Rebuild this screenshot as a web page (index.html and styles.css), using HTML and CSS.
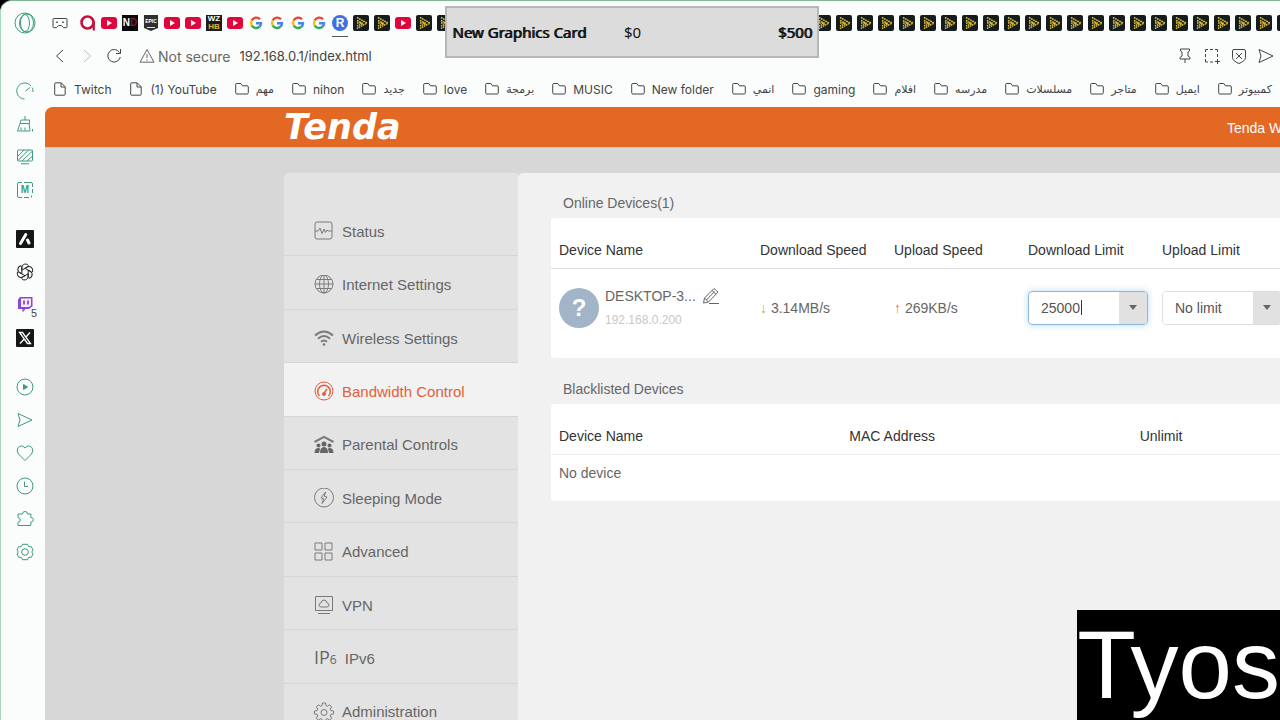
FILE: index.html
```
<!DOCTYPE html>
<html lang="en">

<head>
    <meta charset="utf-8">
    <meta name="viewport" content="width=device-width, initial-scale=1">
    <title>Tenda WiFi</title>
    <link rel="stylesheet" href="styles.css">
</head>

<body>
    <svg class="defs" aria-hidden="true">
        <symbol id="yt" viewBox="0 0 16 16"><rect y="2" width="16" height="12" rx="3" fill="#e0063c"/><path d="M6 5l5 3-5 3z" fill="#fff"/></symbol>
        <symbol id="opgg" viewBox="0 0 16 16"><circle cx="7.500" cy="7.500" r="6" fill="none" stroke="#c8103c" stroke-width="2.600"/><path d="M13.800 7v8.500" stroke="#c8103c" stroke-width="2.200"/></symbol>
        <symbol id="google" viewBox="0 0 16 16"><g fill="none" stroke-width="2.400"><path d="M12 4.300A5 5 0 0 0 3.700 5.500" stroke="#ea4335"/><path d="M3.700 5.500a5 5 0 0 0 0 5" stroke="#fbbc05"/><path d="M3.700 10.500a5 5 0 0 0 7.800 1.200" stroke="#34a853"/><path d="M11.500 11.700A5 5 0 0 0 13 8.200H8" stroke="#4285f4"/></g></symbol>
        <symbol id="play" viewBox="0 0 16 16"><rect width="16" height="16" rx="2" fill="#151c1e"/><path d="M4 2.500L14 8 4 13.500M4 5.500L10 8.500 4 11M4 8h5" fill="none" stroke="#e2c23c" stroke-width="1.500" stroke-dasharray="1.700 .7"/></symbol>
        <symbol id="folder" viewBox="0 0 14 14"><path d="M.7 2.500v8.300q0 1.200 1.200 1.200h10.200q1.200 0 1.200-1.200V5q0-1.200-1.200-1.200H7.500L5.800 1.500H1.700q-1 0-1 1z"/></symbol>
        <symbol id="doc" viewBox="0 0 14 14"><path d="M1.700 1.800q0-1 1-1h5.500l4 4v7.400q0 1-1 1H2.700q-1 0-1-1zM8 1v4h4"/></symbol>
        <symbol id="send" viewBox="0 0 18 18"><path d="M2 2.500L16 9 2 15.500 4 9z"/></symbol>
    </svg>

    <div class="browser">
        <aside class="dock">
            <button class="opera" aria-label="Opera menu"><svg viewBox="0 0 22 22"><circle cx="11" cy="11" r="10"/><ellipse cx="12.500" cy="11" rx="7" ry="9"/><ellipse cx="11" cy="11" rx="4.500" ry="8.500"/></svg></button>
            <div class="dock-group">
                <button aria-label="Speed dial"><svg viewBox="0 0 18 18"><path d="M15 4A8 8 0 1 0 8.500 17M9.500 9L14 5.500M16 5.500q1.200 2 1 4.500"/></svg></button>
                <button aria-label="Cleaner"><svg viewBox="0 0 18 18"><path d="M9 1v4M5 5h8.500v3.500H4zM4 8.500L1.500 16H14l-1-7.500M5 12.500v3M9 12.500v3M16.500 14v2.500"/></svg></button>
                <button aria-label="Wallpaper"><svg viewBox="0 0 18 18"><rect x="1.500" y="2" width="15" height="11" rx="1"/><path d="M2 8l6-6M2 12.500L12.500 2M6 13L16.500 3M11 13l5.500-5M5 15.800h8"/></svg></button>
                <button aria-label="Mods"><svg viewBox="0 0 18 18"><path d="M6 1.500H3q-1.500 0-1.500 1.500v12q0 1.500 1.500 1.500h3M8 1.500h7q1.500 0 1.500 1.500v3M16.500 8v4M8 16.500h5M15.500 14.500v2"/></svg><b>M</b></button>
            </div>
            <div class="dock-group">
                <button aria-label="Aria"><svg viewBox="0 0 18 18"><rect width="18" height="18" rx="1" fill="#151717" stroke="none"/><path d="M4.500 13.500L9.800 4.500M11.500 10l1.500 3" stroke="#fff" stroke-width="3" stroke-linecap="round"/></svg></button>
                <button class="dark" aria-label="ChatGPT"><svg viewBox="-9 -9 18 18"><path id="knot" d="M-3.200 1.800V-4.300A3.700 3.700 0 0 1 3.600-6.300M0-3.700L3.300-5.600"/><use href="#knot" transform="rotate(60)"/><use href="#knot" transform="rotate(120)"/><use href="#knot" transform="rotate(180)"/><use href="#knot" transform="rotate(240)"/><use href="#knot" transform="rotate(300)"/></svg></button>
                <button aria-label="Twitch"><svg viewBox="0 0 18 18"><path d="M4 1h12.500v9.500L13 13H9.500l-3 3.500V13H2V3.500z" fill="#8a45e0" stroke="none"/><path d="M5 2.500h10v7L13 11H5z" fill="#f4eefc" stroke="none"/><path d="M8 4.500v4M12 4.500v4" stroke="#8a45e0" stroke-width="1.800"/></svg><span class="count">5</span></button>
                <button aria-label="X"><svg viewBox="0 0 18 18"><rect width="18" height="18" rx="1" fill="#151717" stroke="none"/><path d="M3.500 3.500h3l8 11h-3zM14 3.500L9.800 8.300M8 10.200l-4 4.300" stroke="#fff" stroke-width="1.300"/></svg></button>
            </div>
            <div class="dock-group">
                <button aria-label="Player"><svg viewBox="0 0 18 18"><circle cx="9" cy="9" r="8"/><path d="M7.500 6.500l4 2.500-4 2.500z" fill="#3f9b78"/></svg></button>
                <button aria-label="Flow"><svg><use href="#send"/></svg></button>
                <button aria-label="Favourites"><svg viewBox="0 0 18 18"><path d="M9 16.500L2.500 10Q0 7 2 3.700 5.500 0 9 4q3.500-4 7-.3 2 3.300-.5 6.300z"/></svg></button>
                <button aria-label="History"><svg viewBox="0 0 18 18"><circle cx="9" cy="9" r="8"/><path d="M8.500 4.500v5H12"/></svg></button>
                <button aria-label="Extensions"><svg viewBox="0 0 18 18"><path d="M2 4h4.500Q6.500 1.500 9 1.500T11.500 4h3.300v3.500q2.500 0 2.500 2.300t-2.500 2.300v3.400H2v-3.200q2.300-.3 2.300-2.300T2 7.600z"/></svg></button>
                <button aria-label="Settings"><svg viewBox="0 0 18 18"><path d="M6.500 1.300h5l1.200 2.300 2.600.1 1.700 3.400L15.800 9l1.200 2-1.700 3.300-2.600.1-1.200 2.300h-5l-1.200-2.300-2.600-.1L1 11l1.200-2L1 7.100l1.700-3.400 2.600-.1z"/><circle cx="9" cy="9" r="3.300"/></svg></button>
            </div>
        </aside>

        <div class="window">
            <div class="tabs" id="tabs">
                <button class="workspace" aria-label="Workspace"><svg viewBox="0 0 16 16"><path d="M2 3.500h12q1 0 1 1v7q0 1.200-1 1.200h-2.500L9.500 10.500h-3l-2 2.200H2q-1 0-1-1.200v-7q0-1 1-1z"/><path d="M4.200 7.200h1.600M10.200 7.200h1.600" stroke-width="1.600"/></svg></button>
            </div>

            <form class="address">
                <button type="button" aria-label="Back"><svg viewBox="0 0 18 18"><path d="M12 3L5.500 9l6.500 6"/></svg></button>
                <button type="button" class="off" aria-label="Forward" disabled><svg viewBox="0 0 18 18"><path d="M6 3l6.500 6L6 15"/></svg></button>
                <button type="button" aria-label="Reload"><svg viewBox="0 0 18 18"><path d="M14.500 5.500A6.300 6.300 0 1 0 15.300 10M15.500 2v4.500H11"/></svg></button>
                <label class="secure" for="url"><svg viewBox="0 0 18 18"><path d="M9 2.500l7 12.700H2zM9 7v4M9 12.300v1.300"/></svg>Not secure</label>
                <input id="url" type="text" value="192.168.0.1/index.html">
                <button type="button" aria-label="Pin"><svg viewBox="0 0 18 18"><path d="M4.500 2h9v2l-1.500 1v4l2 1.500V12H4v-1.500L6 9V5L4.500 4zM9 12v4"/></svg></button>
                <button type="button" aria-label="Snapshot"><svg viewBox="0 0 18 18"><path d="M2.500 5V2.500H5M7 2.500h3M12 2.500h2.500V5M14.500 7v3M2.500 7v3M2.500 12v3H5M7 15h3M14.500 12v5M12 14.500h5"/></svg></button>
                <button type="button" aria-label="Blocker"><svg viewBox="0 0 18 18"><path d="M4 2.500h10q1.500 0 1.500 1.500v6.500Q15.500 14 9 16.500 2.500 14 2.500 10.500V4Q2.500 2.500 4 2.500zM6 6l6 6M12 6l-6 6"/></svg></button>
                <button type="button" aria-label="Send"><svg><use href="#send"/></svg></button>
            </form>

            <nav class="bookmarks" id="bookmarks"></nav>

            <div class="site">
                <header class="topbar">
                    <div class="container">
                        <a class="logo" href="#">Tenda</a>
                        <a class="product" href="#">Tenda WiFi</a>
                    </div>
                </header>

                <div class="container main">
                    <nav class="menu">
                        <ul>
                            <li><a href="#"><svg viewBox="0 0 20 20"><rect x="1" y="1" width="17" height="17" rx="2"/><path d="M1 10h3l2-3 2 5.500L10 8l1.500 3.500L13 9l1 1h4"/></svg>Status</a></li>
                            <li><a href="#"><svg viewBox="0 0 20 20"><circle cx="10" cy="9" r="9"/><ellipse cx="10" cy="9" rx="4.500" ry="9"/><path d="M10 0v18M1 9h18M2.500 4.500h15M2.500 13.500h15"/></svg>Internet Settings</a></li>
                            <li><a href="#"><svg viewBox="0 0 20 20"><path d="M1 7.500q9-8 18 0M4 10.800q6-5.500 12 0M7 13.800q3-2.700 6 0" stroke-width="2"/><circle cx="10" cy="16.500" r="1.300" fill="#777" stroke="none"/></svg>Wireless Settings</a></li>
                            <li class="active"><a href="#"><svg viewBox="0 0 20 20"><circle cx="10" cy="10" r="9"/><path d="M5.500 15A6.300 6.300 0 1 1 14.500 15M10 12.500L13 8" stroke-width="1.500"/><circle cx="10" cy="13" r="1.500" fill="#e2603a"/></svg>Bandwidth Control</a></li>
                            <li><a href="#"><svg viewBox="0 0 20 20"><path d="M.5 7L10 1.800 19.500 7" stroke-width="2"/><g fill="#666" stroke="none"><circle cx="10" cy="9" r="2.500"/><circle cx="4.500" cy="10.500" r="2"/><circle cx="15.500" cy="10.500" r="2"/><path d="M6 18q0-6 4-6t4 6zM.5 18q0-5 4-5 1.500 0 1.500 1l-1 4zM19.500 18q0-5-4-5-1.500 0-1.500 1l1 4z"/></g></svg>Parental Controls</a></li>
                            <li><a href="#"><svg viewBox="0 0 20 20"><circle cx="10" cy="9.500" r="9.500"/><path d="M11.500 4L7 10l2.500.7L8 15.500 13 9l-2.700-.6z"/></svg>Sleeping Mode</a></li>
                            <li><a href="#"><svg viewBox="0 0 20 20"><path d="M1 1h7v7H1zM11 1h7v7h-7zM1 11h7v7H1zM11 11h7v7h-7z"/></svg>Advanced</a></li>
                            <li><a href="#"><svg viewBox="0 0 20 20"><path d="M1.500 1.500h17v14h-17zM4 18.500h12M7 12q-2-.3-2-2t2-2q.5-3 3-3t3 3q2 .3 2 2t-2 2z"/></svg>VPN</a></li>
                            <li><a href="#"><span class="ip">IP<small>6</small></span>IPv6</a></li>
                            <li><a href="#"><svg viewBox="0 0 20 20"><path d="M8.500 1h3l.5 2.700 1.500.6 2.200-1.500 2 2-1.500 2.300.6 1.400 2.700.5v3l-2.700.5-.6 1.400 1.500 2.300-2 2-2.200-1.500-1.500.6-.5 2.700h-3L8 17.300l-1.500-.6-2.200 1.500-2-2 1.500-2.300-.6-1.400L.5 12V9l2.700-.5.6-1.400-1.500-2.300 2-2 2.200 1.500L8 3.700z"/><circle cx="10" cy="10.500" r="3"/></svg>Administration</a></li>
                        </ul>
                    </nav>

                    <main class="content">
                        <h2>Online Devices(1)</h2>
                        <div class="card online">
                            <table>
                                <thead>
                                    <tr>
                                        <th class="name">Device Name</th>
                                        <th>Download Speed</th>
                                        <th>Upload Speed</th>
                                        <th>Download Limit</th>
                                        <th>Upload Limit</th>
                                        <th></th>
                                    </tr>
                                </thead>
                                <tbody>
                                    <tr>
                                        <td>
                                            <div class="device">
                                                <span class="avatar">?</span>
                                                <div>
                                                    <div class="device-name">DESKTOP-3...
                                                        <button aria-label="Rename"><svg viewBox="0 0 18 18"><path d="M1.500 16l1-5L12 1.500l4 3.500-9.500 10zM2.500 11l4 4M10 3.500l4 3.700M4.500 13l8-8.500M7 16.500h10"/></svg></button>
                                                    </div>
                                                    <div class="device-ip">192.168.0.200</div>
                                                </div>
                                            </div>
                                        </td>
                                        <td><span class="down">↓</span> 3.14MB/s</td>
                                        <td><span class="up">↑</span> 269KB/s</td>
                                        <td>
                                            <div class="combo focused">
                                                <input type="text" value="25000" aria-label="Download limit">
                                                <button aria-label="Download limit options"></button>
                                            </div>
                                        </td>
                                        <td>
                                            <div class="combo">
                                                <input type="text" value="No limit" aria-label="Upload limit">
                                                <button aria-label="Upload limit options"></button>
                                            </div>
                                        </td>
                                        <td></td>
                                    </tr>
                                </tbody>
                            </table>
                        </div>

                        <h2>Blacklisted Devices</h2>
                        <div class="card blacklist">
                            <table>
                                <thead>
                                    <tr>
                                        <th>Device Name</th>
                                        <th>MAC Address</th>
                                        <th>Unlimit</th>
                                    </tr>
                                </thead>
                                <tbody>
                                    <tr>
                                        <td colspan="3">No device</td>
                                    </tr>
                                </tbody>
                            </table>
                        </div>
                    </main>
                </div>
            </div>
        </div>
    </div>

    <div class="goal"><b>New Graphics Card</b><span>$0</span><b>$500</b></div>
    <div class="caption">Tyos</div>

    <script>
        var tabs = ['opgg', 'yt', 'no', 'epic', 'yt', 'yt', 'wz', 'yt', 'google', 'google', 'google', 'google', 'r', 'play', 'play', 'yt'];
        while (tabs.length < 58) tabs.push('play');

        // favicons that are made of letters
        var letters = {
            no: 'N<i>D</i>',
            epic: 'EPIC',
            wz: 'WZ<i>HB</i>',
            r: 'R'
        };

        var bookmarks = ['Twitch', '(1) YouTube', 'مهم', 'nihon', 'جديد', 'love', 'برمجة', 'MUSIC', 'New folder', 'انمي', 'gaming',
            'افلام', 'مدرسه', 'مسلسلات', 'متاجر', 'ايميل', 'كمبيوتر'];

        var html = '';
        for (var i = 0; i < tabs.length; i++) {
            html += '<button class="tab' + (tabs[i] == 'r' ? ' current' : '') + '" aria-label="Tab ' + (i + 1) + '">';
            if (letters[tabs[i]]) html += '<span class="fav ' + tabs[i] + '">' + letters[tabs[i]] + '</span>';
            else html += '<svg><use href="#' + tabs[i] + '"/></svg>';
            html += '</button>';
        }
        document.getElementById('tabs').insertAdjacentHTML('beforeend', html);

        html = '';
        for (var j = 0; j < bookmarks.length; j++) {
            var arabic = bookmarks[j].charCodeAt(0) > 1500;
            html += '<a href="#"><svg><use href="#' + (j < 2 ? 'doc' : 'folder') + '"/></svg><span' + (arabic ? ' class="arabic" lang="ar"' : '') + '>' + bookmarks[j] + '</span></a>';
        }
        document.getElementById('bookmarks').innerHTML = html;
    </script>
</body>

</html>
```
FILE: styles.css
```
* {
    margin: 0;
    padding: 0;
    box-sizing: border-box;
}

body {
    height: 100vh;
    overflow: hidden;
    background: #000000;
    font-family: "Liberation Sans", Arial, sans-serif;
}

button {
    border: 0;
    background: none;
    font: inherit;
    color: inherit;
}

a {
    color: inherit;
    text-decoration: none;
}

svg {
    display: block;
    flex: none;
    fill: none;
    stroke: currentColor;
}

.defs {
    position: absolute;
    width: 0;
    height: 0;
}

.browser {
    display: flex;
    height: 100vh;
    overflow: hidden;
    background: #fafdfc;
    border-top: 1px solid #7fb893;
    border-left: 1px solid #a5dcc0;
    border-top-left-radius: 12px;
}

/* left dock */

.dock {
    flex: none;
    width: 44px;
    padding: 11px 0 0 2px;
    color: #3f9b78;
}

.dock button {
    display: flex;
    align-items: center;
    justify-content: center;
    position: relative;
    width: 44px;
    height: 33px;
}

.dock svg {
    width: 18px;
    height: 18px;
}

.dock .opera {
    height: 22px;
    margin-bottom: 40px;
}

.dock .opera svg {
    width: 22px;
    height: 22px;
}

.dock b {
    position: absolute;
    font-size: 10px;
}

.dock-group {
    margin-bottom: 16px;
}

.dock .dark {
    color: #222222;
}

.count {
    position: absolute;
    right: 10px;
    bottom: 2px;
    font-size: 11px;
    line-height: 12px;
    color: #444444;
    background: #fafdfc;
}

/* browser bars */

.window {
    flex: 1;
    min-width: 0;
    display: flex;
    flex-direction: column;
    color: #444444;
    font-family: Inter, "Liberation Sans", sans-serif;
}

.tabs {
    display: flex;
    flex: none;
    gap: 5px;
    height: 38px;
    padding: 5px 0 0 7px;
    overflow: hidden;
}

.tabs button {
    flex: none;
    width: 16px;
    height: 31px;
    padding-top: 9px;
    display: flex;
    align-items: flex-start;
}

.tabs svg,
.fav {
    width: 16px;
    height: 16px;
}

.tab svg {
    stroke: none;
}

.tabs .workspace {
    margin-right: 7px;
}

.tabs .current {
    border-bottom: 1px solid #555555;
}

.fav {
    flex: none;
    color: #ffffff;
    font-family: "Liberation Sans", Arial, sans-serif;
    font-weight: bold;
    text-align: center;
}

.fav i {
    font-style: normal;
}

.no {
    background: #08080a;
    font-size: 10px;
    line-height: 16px;
}

.no i {
    color: #7a1a2c;
}

.epic {
    padding: 1px;
    background: #2d2f32;
    font-size: 5px;
    line-height: 11px;
    clip-path: polygon(6% 0, 94% 0, 94% 82%, 50% 100%, 6% 82%);
}

.epic::after {
    content: "";
    display: block;
    width: 8px;
    height: 1px;
    margin: 0 auto;
    background: #dddddd;
}

.wz {
    display: flex;
    flex-direction: column;
    align-items: center;
    background: #1c1c18;
    font-size: 8px;
    line-height: 8px;
}

.wz i {
    color: #e3b23a;
}

.r {
    border-radius: 50%;
    background: #3f6fe0;
    font-size: 12px;
    line-height: 16px;
}

.address {
    display: flex;
    flex: none;
    align-items: center;
    gap: 9px;
    height: 34px;
    padding: 0 5px 0 6px;
    font-size: 14px;
}

.address svg {
    width: 18px;
    height: 18px;
}

.address .off {
    color: #bbbbbb;
}

.secure {
    display: flex;
    align-items: center;
    gap: 2px;
    margin-left: 6px;
    color: #666666;
}

.address input {
    flex: 1;
    border: 0;
    outline: 0;
    background: none;
    font: inherit;
    font-size: 13px;
    color: #444444;
}

.bookmarks {
    display: flex;
    flex: none;
    gap: 18px;
    height: 34px;
    padding: 0 0 2px 8px;
    overflow: hidden;
    font-size: 12px;
}

.bookmarks a {
    display: flex;
    flex: none;
    align-items: center;
    gap: 7px;
}

.bookmarks svg {
    width: 14px;
    height: 14px;
}

.arabic {
    font-family: "DejaVu Sans", sans-serif;
    font-size: 11px;
}

/* router page */

.site {
    flex: 1;
    overflow: hidden;
    display: flex;
    flex-direction: column;
    background: #d7d7d7;
    border-top-left-radius: 8px;
    font-family: "Liberation Sans", Arial, sans-serif;
}

.container {
    display: flex;
    min-width: 1171px;
    margin: 0 239px;
}

.topbar {
    flex: none;
    background: #e36824;
    border-bottom: 1px solid #ecc5ae;
    color: #ffffff;
}

.topbar .container {
    align-items: center;
    justify-content: space-between;
    height: 40px;
}

.logo {
    font-family: "DejaVu Sans", sans-serif;
    font-size: 35px;
    line-height: 40px;
    font-weight: bold;
    font-style: italic;
}

.product {
    width: 228px;
    flex: none;
    padding-top: 2px;
    font-size: 14px;
}

.main {
    flex: 1;
    margin-top: 25px;
}

.menu {
    flex: none;
    width: 234px;
    padding-top: 30px;
    background: #e3e3e3;
    border-top-left-radius: 5px;
    color: #666666;
    font-size: 15px;
}

.menu ul {
    display: flex;
    flex-direction: column;
    height: 534px;
    list-style: none;
}

.menu li {
    flex: 1;
    border-bottom: 1px solid #d5d5d5;
}

.menu a {
    display: flex;
    align-items: center;
    gap: 8px;
    height: 100%;
    padding: 4px 0 0 30px;
}

.menu svg {
    width: 20px;
    height: 20px;
    color: #7a7a7a;
}

.menu .active,
.menu .active svg {
    color: #e2603a;
}

.menu .active {
    background: #f2f2f2;
}

.ip {
    font-family: "Open Sans", sans-serif;
    font-size: 18px;
    line-height: 20px;
    font-weight: 500;
}

.ip small {
    font-size: 12px;
}

.content {
    flex: 1;
    padding: 15px 33px;
    background: #f1f1f1;
    border-top-left-radius: 5px;
    color: #666666;
    font-size: 14px;
}

.content h2 {
    padding-left: 12px;
    font-size: 14px;
    line-height: 30px;
    font-weight: normal;
}

.card {
    margin-bottom: 16px;
    background: #ffffff;
    border-radius: 4px;
}

.card table {
    width: 100%;
    table-layout: fixed;
    border-collapse: collapse;
}

.card th {
    padding: 22px 8px 8px;
    border-bottom: 1px solid #dddddd;
    line-height: 20px;
    font-weight: normal;
    text-align: left;
    color: #333333;
}

.card .name {
    width: 201px;
}

.card td {
    padding: 8px 8px 18px;
    line-height: 20px;
}

.card.online td {
    height: 89px;
    padding: 0 8px 11px;
}

.blacklist th {
    border-color: #eeeeee;
}

.device {
    display: flex;
    align-items: center;
    gap: 6px;
}

.avatar {
    flex: none;
    width: 40px;
    height: 40px;
    border-radius: 50%;
    background: #a2b4c8;
    color: #ffffff;
    font-size: 24px;
    line-height: 40px;
    font-weight: bold;
    text-align: center;
}

.device-name {
    display: flex;
    align-items: center;
    gap: 6px;
    line-height: 24px;
}

.device-name svg {
    width: 18px;
    height: 18px;
}

.device-ip {
    font-size: 12px;
    line-height: 24px;
    color: #c8c8c8;
}

.down {
    color: #b5b83a;
}

.up {
    color: #e8793a;
}

.combo {
    display: flex;
    width: 120px;
    height: 34px;
    border: 1px solid #dddddd;
    border-radius: 4px;
    overflow: hidden;
}

.combo input {
    flex: 1;
    min-width: 0;
    padding-left: 12px;
    border: 0;
    outline: 0;
    font: inherit;
    color: #555555;
}

.combo button {
    display: flex;
    align-items: center;
    justify-content: center;
    width: 28px;
    background: #e1e1e1;
}

.combo button::after {
    content: "";
    border: 4px solid transparent;
    border-top: 5px solid #666666;
    border-bottom: 0;
}

.focused {
    border-color: #8db9df;
    box-shadow: 0 0 7px #b9dcf5;
}

/* text cursor */
.focused input {
    background: linear-gradient(#333333, #333333) 52px center / 1px 15px no-repeat;
}

/* stream overlays */

.goal {
    position: absolute;
    top: 6px;
    left: 445px;
    display: grid;
    grid-template-columns: 172px 1fr auto;
    align-items: center;
    width: 374px;
    height: 52px;
    padding: 0 5px;
    background: #dcdcdc;
    border: 2px solid #b7b7ba;
    color: #111111;
    font-family: "Noto Sans", sans-serif;
    font-size: 15px;
}

.goal b {
    font-weight: normal;
    text-shadow: 1px 0 #111111;
}

.caption {
    position: absolute;
    right: 0;
    bottom: 0;
    background: #000000;
    color: #ffffff;
    font-size: 96px;
    line-height: 110px;
}
```
